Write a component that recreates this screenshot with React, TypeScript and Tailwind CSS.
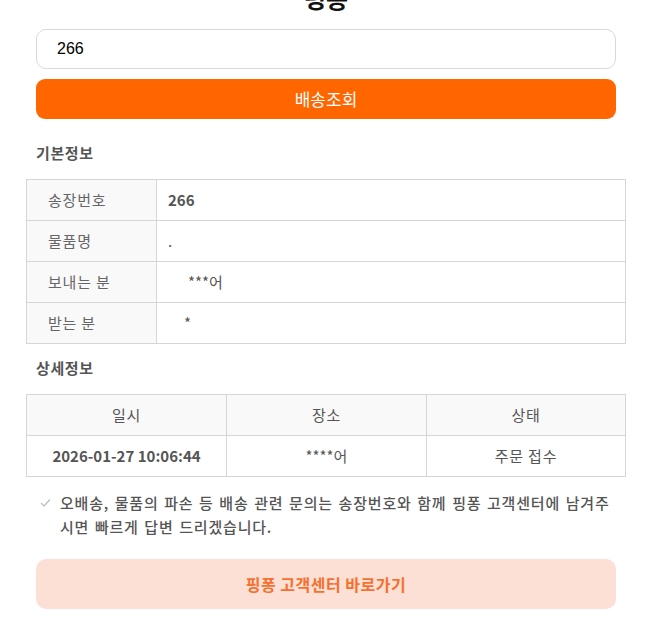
import React from "react";

const KR = { fontFamily: '"Noto Sans CJK KR", "Noto Sans", sans-serif' };

function InfoRow({ label, value, bold, pad, last }: { label: string; value: string; bold?: boolean; pad?: string; last?: boolean }) {
  return (
    <div className={`flex ${last ? "h-[40px]" : "h-[41px] border-b border-[#d6d6d6]"}`}>
      <div className="w-[130px] shrink-0 bg-[#f9f9f9] border-r border-[#d6d6d6] flex items-center pl-[21px] text-[15px] tracking-[0.8px] text-[#666]">
        {label}
      </div>
      <div className={`flex-1 flex items-center ${pad ?? "pl-[11px]"} text-[15px] ${bold ? "font-bold text-[#555]" : "text-[#555]"}`}>
        {value}
      </div>
    </div>
  );
}

export default function App() {
  return (
    <div className="w-[665px] h-[636px] overflow-hidden bg-white" style={KR}>
      <div className="w-[600px] ml-[26px]">
        <div className="h-[29px] relative overflow-hidden">
          <div className="absolute left-0 right-0 bottom-[19px] text-center text-[24px] font-bold leading-none text-[#111]">핑퐁</div>
        </div>
        <div className="px-[10px]">
          <div className="h-[40px] rounded-[10px] border border-[#d9d9d9] flex items-center pl-[20px] text-[16px] text-black" style={{ fontFamily: '"Liberation Sans", Arial, sans-serif' }}>
            266
          </div>
          <button className="mt-[10px] w-full h-[40px] rounded-[9px] bg-[#ff6600] text-white text-[17px] flex items-center justify-center">
            배송조회
          </button>
        </div>
        <div className="pl-[10px] h-[60px] pt-[9px] flex items-center text-[15px] tracking-[0.6px] font-bold text-[#555]">기본정보</div>
        <div className="border border-[#d6d6d6]">
          <InfoRow label="송장번호" value="266" bold />
          <InfoRow label="물품명" value="." />
          <InfoRow label="보내는 분" value="***어" pad="pl-[31px]" />
          <InfoRow label="받는 분" value="*" pad="pl-[27px]" last />
        </div>
        <div className="pl-[10px] h-[50px] pb-[2px] flex items-center text-[15px] tracking-[0.6px] font-bold text-[#555]">상세정보</div>
        <div className="border border-[#d6d6d6] text-[15px] text-[#555]">
          <div className="grid grid-cols-[199px_200px_199px] h-[41px] bg-[#f9f9f9] border-b border-[#d6d6d6] tracking-[0.8px]">
            <div className="flex items-center justify-center">일시</div>
            <div className="flex items-center justify-center border-l border-[#d6d6d6]">장소</div>
            <div className="flex items-center justify-center border-l border-[#d6d6d6]">상태</div>
          </div>
          <div className="grid grid-cols-[199px_200px_199px] h-[40px]">
            <div className="flex items-center justify-center font-bold">2026-01-27 10:06:44</div>
            <div className="flex items-center justify-center border-l border-[#d6d6d6]">****어</div>
            <div className="flex items-center justify-center border-l border-[#d6d6d6] tracking-[0.8px]">주문 접수</div>
          </div>
        </div>
        <div className="flex pl-[14px] pr-[10px] mt-[14px]">
          <svg width="11" height="24" viewBox="0 0 11 24" className="shrink-0">
            <polyline points="1,12 4,15 10,8.5" fill="none" stroke="#bbb" strokeWidth="1.2" />
          </svg>
          <p className="ml-[9px] text-[15px] leading-[24px] text-[#555] font-medium tracking-[0.8px] [word-spacing:1.5px]">
            오배송, 물품의 파손 등 배송 관련 문의는 송장번호와 함께 핑퐁 고객센터에 남겨주시면 빠르게 답변 드리겠습니다.
          </p>
        </div>
        <div className="px-[10px] mt-[20px]">
          <button className="w-full h-[50px] rounded-[10px] bg-[#fce0d5] text-[#f5702f] text-[16px] tracking-[0.5px] font-bold flex items-center justify-center">
            핑퐁 고객센터 바로가기
          </button>
        </div>
      </div>
    </div>
  );
}
